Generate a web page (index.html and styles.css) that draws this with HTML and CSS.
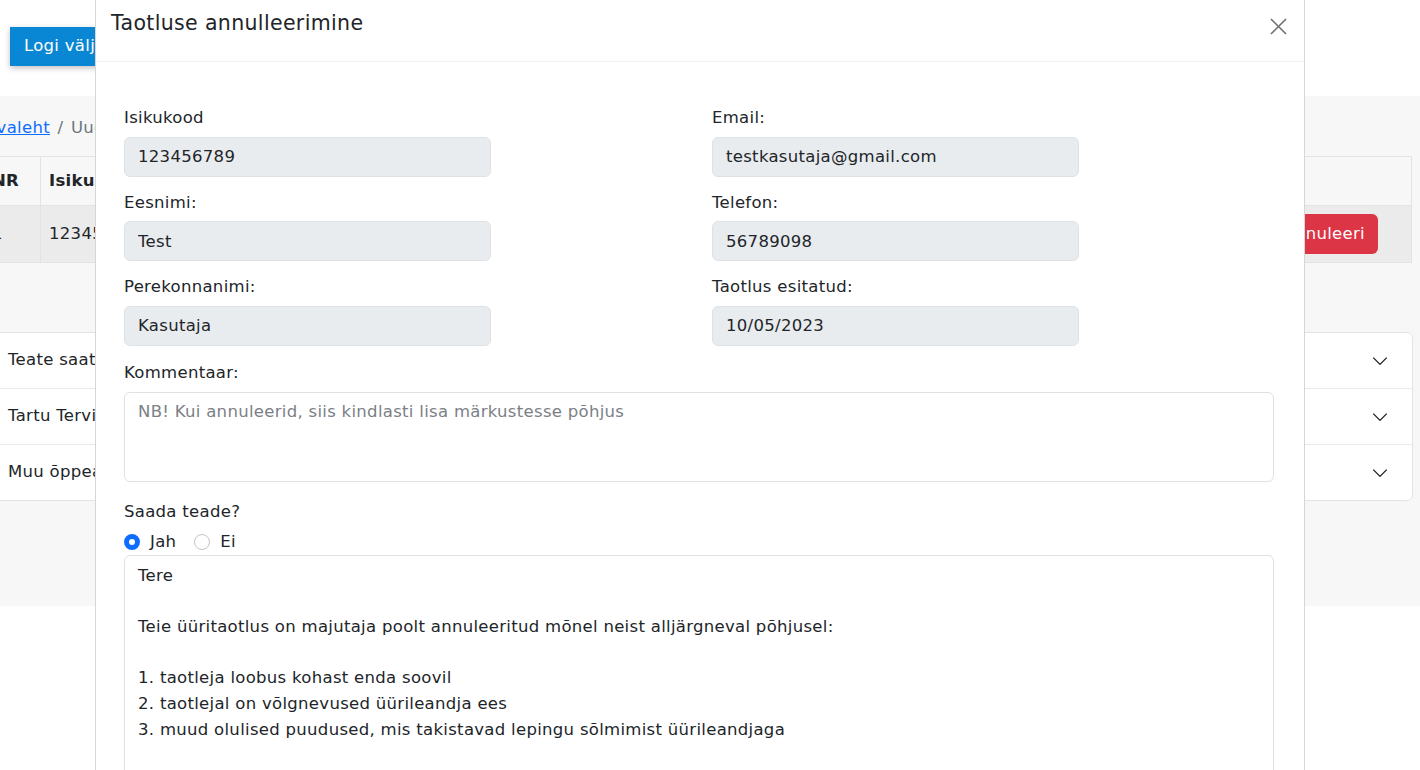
FILE: index.html
```html
<!DOCTYPE html>
<html lang="et">
<head>
<meta charset="utf-8">
<title>Taotluse annulleerimine</title>
<link rel="stylesheet" href="styles.css">
</head>
<body>
<header class="topbar">
  <button class="btn-logout">Logi välja</button>
</header>
<main class="main">
  <nav class="crumbs"><a href="#">Avaleht</a> <span class="sep">/</span> Uued taotlused</nav>
  <table class="tbl">
    <thead>
      <tr><th class="c-nr">NR</th><th>Isikukood</th><th>Nimi</th><th>Email</th><th>Telefon</th><th class="c-act"></th></tr>
    </thead>
    <tbody>
      <tr><td class="c-nr">1</td><td>123456789</td><td>Test Kasutaja</td><td>testkasutaja@gmail.com</td><td>56789098</td><td class="c-act"><button class="btn-danger">Annuleeri</button></td></tr>
    </tbody>
  </table>
  <div class="accordion">
    <div class="acc-item"><span>Teate saatmine</span><svg class="chev" viewBox="0 0 16 16"><path d="M2 5l6 6 6-6"/></svg></div>
    <div class="acc-item"><span>Tartu Tervishoiu Kõrgkool</span><svg class="chev" viewBox="0 0 16 16"><path d="M2 5l6 6 6-6"/></svg></div>
    <div class="acc-item"><span>Muu õppeasutus</span><svg class="chev" viewBox="0 0 16 16"><path d="M2 5l6 6 6-6"/></svg></div>
  </div>
</main>

<div class="modal">
  <div class="modal-header">
    <h5 class="modal-title">Taotluse annulleerimine</h5>
    <button class="btn-close" aria-label="Sulge"><svg viewBox="0 0 18 18"><path d="M1 1l16 16M17 1L1 17"/></svg></button>
  </div>
  <div class="modal-body">
    <div class="fields">
      <div class="field"><label>Isikukood</label><input class="ctl" value="123456789" readonly></div>
      <div class="field"><label>Email:</label><input class="ctl" value="testkasutaja@gmail.com" readonly></div>
      <div class="field"><label>Eesnimi:</label><input class="ctl" value="Test" readonly></div>
      <div class="field"><label>Telefon:</label><input class="ctl" value="56789098" readonly></div>
      <div class="field"><label>Perekonnanimi:</label><input class="ctl" value="Kasutaja" readonly></div>
      <div class="field"><label>Taotlus esitatud:</label><input class="ctl" value="10/05/2023" readonly></div>
    </div>
    <label class="lbl">Kommentaar:</label>
    <textarea class="area area-comment" placeholder="NB! Kui annuleerid, siis kindlasti lisa märkustesse põhjus"></textarea>
    <label class="lbl lbl-send">Saada teade?</label>
    <div class="radios">
      <label class="radio"><input type="radio" name="send" checked> Jah</label>
      <label class="radio"><input type="radio" name="send"> Ei</label>
    </div>
    <textarea class="area area-msg">Tere

Teie üüritaotlus on majutaja poolt annuleeritud mõnel neist alljärgneval põhjusel:

1. taotleja loobus kohast enda soovil
2. taotlejal on võlgnevused üürileandja ees
3. muud olulised puudused, mis takistavad lepingu sõlmimist üürileandjaga

</textarea>
  </div>
</div>
</body>
</html>
```

FILE: styles.css
```css
* { box-sizing: border-box; }
html, body { margin: 0; padding: 0; }
body {
  font-family: "DejaVu Sans", Verdana, sans-serif;
  font-size: 16.5px;
  letter-spacing: 0.3px;
  line-height: 1.6;
  color: #212529;
  background: #fff;
  width: 1420px;
  height: 770px;
  overflow: hidden;
}

.topbar { height: 96px; padding: 27px 0 0 10px; }
.btn-logout {
  font: inherit;
  letter-spacing: inherit;
  color: #fff;
  background: #0a87d4;
  border: none;
  height: 39px;
  padding: 0 14px;
  box-shadow: 0 2px 6px rgba(0,0,0,.25);
}

.main {
  background: #f7f7f7;
  height: 510px;
  padding: 19px 8px 0 0;
}
.crumbs { margin-left: -14px; color: #6c757d; height: 41px; }
.crumbs a { color: #0d6efd; }
.crumbs .sep { margin: 0 2px; }

.tbl {
  margin-left: -17px;
  width: 1429px;
  border-collapse: collapse;
  color: #212529;
}
.tbl th, .tbl td { border: 1px solid #e3e3e3; padding: 0 8px; text-align: left; }
.tbl th { height: 49px; font-weight: bold; background: #f7f7f7; }
.tbl td { height: 57px; background: #ebebeb; }
.tbl .c-nr { width: 57px; }
.tbl .c-act { width: 150px; text-align: right; padding-right: 33px; }
.btn-danger {
  font: inherit;
  letter-spacing: inherit;
  color: #fff;
  background: #dc3545;
  border: none;
  border-radius: 6px;
  height: 40px;
  padding: 0 13px;
}

.accordion {
  margin: 69px 0 0 -13px;
  background: #fff;
  border: 1px solid #e3e3e3;
  border-radius: 6px;
  width: 1426px;
}
.acc-item {
  height: 56px;
  display: flex;
  align-items: center;
  justify-content: space-between;
  padding: 0 23px 0 20px;
  border-top: 1px solid #e9e9e9;
}
.acc-item:first-child { border-top: none; height: 55px; }
.chev { width: 18px; height: 18px; fill: none; stroke: #222; stroke-width: 1.2; }

/* modal */
.modal {
  position: fixed;
  left: 95px;
  top: 0;
  width: 1210px;
  height: 800px;
  background: #fff;
  border-left: 1px solid #d6d6d6;
  border-right: 1px solid #d6d6d6;
}
.modal-header {
  height: 62px;
  padding: 8px 16px 0 15px;
  border-bottom: 1px solid #f2f2f2;
  display: flex;
  align-items: flex-start;
  justify-content: space-between;
}
.modal-title { margin: 0; font-size: 20.5px; letter-spacing: 0.35px; font-weight: normal; line-height: 30px; color: #212529; }
.btn-close {
  background: none;
  border: none;
  padding: 0;
  width: 17px;
  height: 17px;
  margin: 10px 1px 0 0;
}
.btn-close svg { width: 17px; height: 17px; stroke: #707070; stroke-width: 1.7; fill: none; display: block; }

.modal-body { padding: 43px 29px 0 28px; }
.fields {
  display: grid;
  grid-template-columns: 588px 1fr;
  row-gap: 13px;
}
.field label, .lbl { display: block; line-height: 25.6px; margin-bottom: 6px; color: #212529; }
.ctl {
  display: block;
  width: 367px;
  height: 40px;
  font: inherit;
  letter-spacing: inherit;
  color: #212529;
  background: #e9ecef;
  border: 1px solid #dee2e6;
  border-radius: 6px;
  padding: 6px 13px;
  outline: none;
}
.lbl { margin-top: 14px; margin-bottom: 7px; }
.area {
  display: block;
  width: 1150px;
  font: inherit;
  letter-spacing: inherit;
  line-height: 25.6px;
  color: #212529;
  background: #fff;
  border: 1px solid #dee2e6;
  border-radius: 6px;
  padding: 6px 13px;
  resize: none;
  outline: none;
}
.area::placeholder { color: #7b8086; }
.area-comment { height: 90px; }
.lbl-send { margin-top: 17px; margin-bottom: 4px; }
.radios { display: flex; gap: 18px; height: 26px; margin-top: 2px; align-items: center; }
.radio { display: flex; align-items: center; gap: 10px; }
.radio input {
  appearance: none;
  -webkit-appearance: none;
  margin: 0;
  width: 16px;
  height: 16px;
  border-radius: 50%;
  border: 1px solid #c4c4c4;
  background: #fff;
}
.radio input:checked {
  border: 5px solid #0d6efd;
  background: #fff;
}
.area-msg { height: 260px; padding-top: 7px; margin-top: 0; }
```
